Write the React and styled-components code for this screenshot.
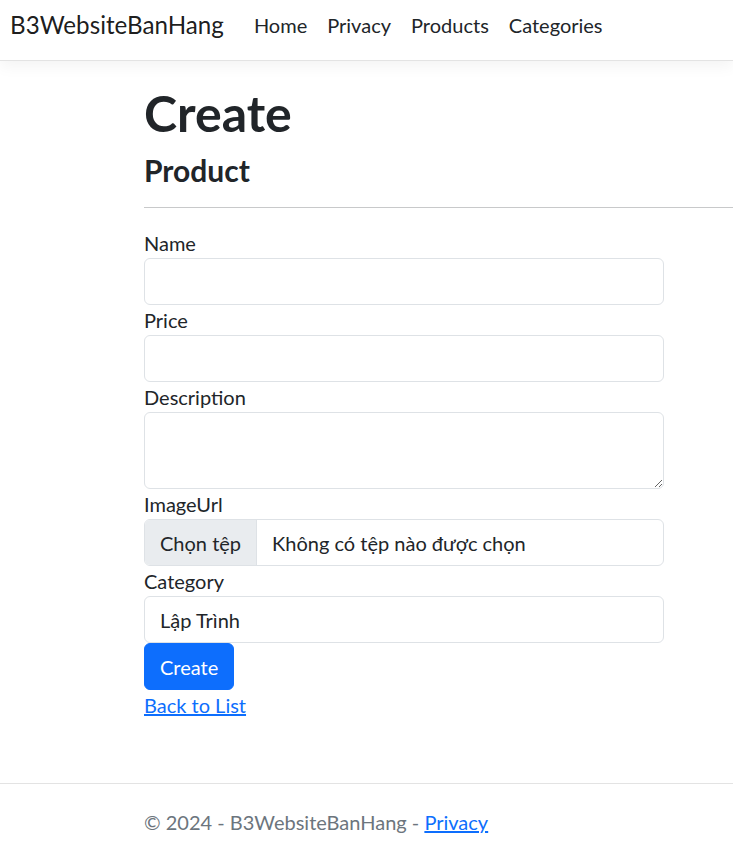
import React from "react";
import styled, { createGlobalStyle } from "styled-components";

const colors = {
  body: "#212529",
  muted: "#6c757d",
  link: "#0d6efd",
  border: "#dee2e6",
  fileButton: "#e9ecef",
};

const GlobalStyle = createGlobalStyle`
  html, body {
    margin: 0;
    padding: 0;
    background: #fff;
    overflow: hidden;
  }
  body {
    font-family: Lato, "Noto Sans", sans-serif;
    font-size: 20px;
    line-height: 30px;
    color: ${colors.body};
  }
  * {
    box-sizing: border-box;
  }
`;

const Page = styled.div`
  width: 733px;
  height: 844px;
  display: flex;
  flex-direction: column;
`;

const Navbar = styled.header`
  height: 61px;
  flex-shrink: 0;
  display: flex;
  align-items: center;
  padding: 0 10px;
  border-bottom: 1px solid #e3e3e3;
  box-shadow: 0 5px 15px rgba(0, 0, 0, 0.05);
  position: relative;
  z-index: 1;
`;

const Brand = styled.a`
  font-size: 24.2px;
  line-height: 30px;
  color: rgba(0, 0, 0, 0.9);
  text-decoration: none;
  margin-right: 20px;
  padding-bottom: 10px;
`;

const NavList = styled.nav`
  display: flex;
  padding-bottom: 10px;
`;

const NavLink = styled.a`
  padding: 0 10px;
  color: ${colors.body};
  text-decoration: none;
  line-height: 30px;
`;

const Main = styled.main`
  padding-left: 144px;
  padding-top: 22px;
`;

const Title = styled.h1`
  margin: 0 0 10px;
  font-size: 50px;
  line-height: 60px;
  font-weight: 700;
`;

const SubTitle = styled.h4`
  margin: 0;
  font-size: 30px;
  line-height: 34px;
  font-weight: 700;
`;

const Rule = styled.hr`
  margin: 20px 0 20px;
  border: 0;
  border-top: 1px solid #c8c9ca;
`;

const Form = styled.form`
  width: 520px;
  display: flex;
  flex-direction: column;
`;

const Label = styled.label`
  display: block;
  line-height: 30px;
`;

const fieldBase = `
  display: block;
  width: 100%;
  border: 1px solid #dee2e6;
  border-radius: 6px;
  background: #fff;
  font-family: inherit;
  font-size: 20px;
  line-height: 30px;
  color: #212529;
  margin: 0;
  outline: none;
`;

const TextInput = styled.input`
  ${fieldBase}
  height: 47px;
  padding: 7px 15px;
`;

const TextArea = styled.textarea`
  ${fieldBase}
  height: 77px;
  padding: 7px 15px;
  resize: vertical;
`;

const FileBox = styled.div`
  ${fieldBase}
  height: 47px;
  display: flex;
  align-items: stretch;
  overflow: hidden;
`;

const FileButton = styled.span`
  background: ${colors.fileButton};
  border-right: 1px solid #dee2e6;
  padding: 0 15px;
  display: flex;
  align-items: center;
`;

const FileName = styled.span`
  padding: 0 15px;
  display: flex;
  align-items: center;
`;

const Select = styled.select`
  ${fieldBase}
  height: 47px;
  padding: 7px 15px;
  appearance: none;
  -webkit-appearance: none;
`;

const Button = styled.button`
  align-self: flex-start;
  height: 47px;
  padding: 7px 15px;
  border: 1px solid ${colors.link};
  border-radius: 6px;
  background: ${colors.link};
  color: #fff;
  font-family: inherit;
  font-size: 20px;
  line-height: 30px;
`;

const Link = styled.a`
  color: ${colors.link};
  text-decoration: underline;
`;

const BackRow = styled.div`
  line-height: 30px;
`;

const Footer = styled.footer`
  margin-top: auto;
  border-top: 1px solid #e3e3e3;
  height: 61px;
  padding-left: 144px;
  padding-top: 8px;
  line-height: 60px;
  color: ${colors.muted};
  white-space: nowrap;
`;

const fields = [
  { label: "Name", kind: "text" },
  { label: "Price", kind: "text" },
  { label: "Description", kind: "area" },
];

export default function App() {
  return (
    <>
      <GlobalStyle />
      <Page>
        <Navbar>
          <Brand href="#">B3WebsiteBanHang</Brand>
          <NavList>
            <NavLink href="#">Home</NavLink>
            <NavLink href="#">Privacy</NavLink>
            <NavLink href="#">Products</NavLink>
            <NavLink href="#">Categories</NavLink>
          </NavList>
        </Navbar>
        <Main>
          <Title>Create</Title>
          <SubTitle>Product</SubTitle>
          <Rule />
          <Form onSubmit={(e) => e.preventDefault()}>
            {fields.map((f) => (
              <div key={f.label}>
                <Label>{f.label}</Label>
                {f.kind === "area" ? <TextArea rows={2} /> : <TextInput type="text" />}
              </div>
            ))}
            <div>
              <Label>ImageUrl</Label>
              <FileBox>
                <FileButton>Chọn tệp</FileButton>
                <FileName>Không có tệp nào được chọn</FileName>
              </FileBox>
            </div>
            <div>
              <Label>Category</Label>
              <Select defaultValue="1">
                <option value="1">Lập Trình</option>
              </Select>
            </div>
            <Button type="submit">Create</Button>
          </Form>
          <BackRow>
            <Link href="#">Back to List</Link>
          </BackRow>
        </Main>
        <Footer>
          © 2024 - B3WebsiteBanHang - <Link href="#">Privacy</Link>
        </Footer>
      </Page>
    </>
  );
}
